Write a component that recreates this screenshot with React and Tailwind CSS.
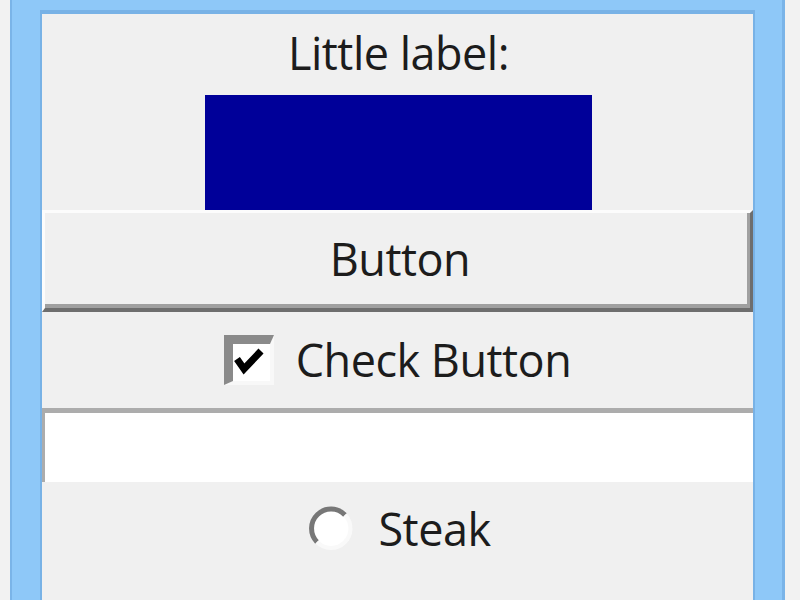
import React from 'react';

const font = { fontFamily: '"Open Sans", "Noto Sans", sans-serif' };

const CheckBox = () => (
  <div className="w-[50px] h-[50px] border-t-[9px] border-l-[9px] border-[#8a8a8a] border-b-[4px] border-r-[4px] border-b-[#f8f8f8] border-r-[#f8f8f8] bg-white">
    <svg width="37" height="37" viewBox="0 0 37 37">
      <polyline points="4,15 11,25 28,7" fill="none" stroke="#000" strokeWidth="7" strokeLinejoin="miter" />
    </svg>
  </div>
);

const Radio = () => (
  <svg width="48" height="48" viewBox="0 0 48 48">
    <circle cx="24" cy="24" r="20" fill="#fff" />
    <path d="M 9 37 A 19 19 0 0 1 37 10" fill="none" stroke="#777" strokeWidth="5" />
    <path d="M 37 10 A 19 19 0 0 1 9 37" fill="none" stroke="#f9f9f9" strokeWidth="4" />
  </svg>
);

export default function App() {
  return (
    <div className="w-[800px] h-[600px] flex overflow-hidden bg-[#f2f2f2]" style={font}>
      <div className="w-[10px] shrink-0" />
      <div className="w-[775px] shrink-0 h-[612px] bg-[#8ec8f8] border-l-[2px] border-r-[3px] border-[#7ab4e8] pl-[28px] pr-[27px] pt-[10px]">
        <div className="h-full border-t-4 border-l-2 border-r-2 border-[#78b2e6] bg-[#f0f0f0] flex flex-col text-[45px] font-medium tracking-[-0.5px] text-[#1c1c1c]">
          <div className="h-[81px] flex items-center justify-center pb-[3px] pl-[2px]">Little label:</div>
          <div className="self-center w-[387px] h-[115px] bg-[#000099] ml-[2px]" />
          <div className="h-[102px] border-t-[3px] border-l-[3px] border-[#fcfcfc] border-b-[4px] border-r-[3px] border-b-[#6e6e6e] border-r-[#6e6e6e]">
            <div className="h-full border-b-[4px] border-r-[3px] border-[#a0a0a0] flex items-center justify-center pl-[8px]">
              Button
            </div>
          </div>
          <div className="h-[96px] flex items-center justify-center gap-[22px]">
            <CheckBox />
            <span>Check Button</span>
          </div>
          <div className="h-[74px] bg-white border-t-[5px] border-l-[3px] border-[#acacac]" />
          <div className="h-[94px] flex items-center justify-center gap-[22px] pl-[4px]">
            <Radio />
            <span>Steak</span>
          </div>
        </div>
      </div>
      <div className="w-[15px] shrink-0" />
    </div>
  );
}
